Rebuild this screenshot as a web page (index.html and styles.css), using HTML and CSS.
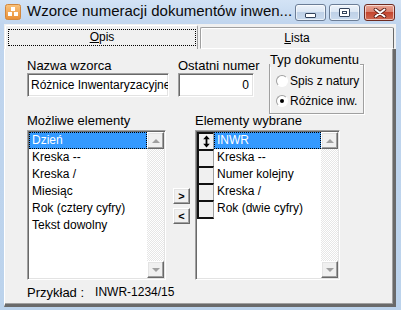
FILE: index.html
```html
<!DOCTYPE html>
<html>
<head>
<meta charset="utf-8">
<link rel="stylesheet" href="styles.css">
</head>
<body>
<div class="window">
  <div class="titlebar">
    <svg class="appicon" viewBox="0 0 16 16" width="16" height="16">
      <defs>
        <linearGradient id="ig" x1="0" y1="0" x2="0" y2="1">
          <stop offset="0" stop-color="#f9c47e"/>
          <stop offset="1" stop-color="#e98f36"/>
        </linearGradient>
      </defs>
      <rect x="0.5" y="0.5" width="15" height="15" rx="2" fill="url(#ig)" stroke="#d2873c"/>
      <rect x="6" y="3" width="4" height="4" fill="#fff"/>
      <rect x="3" y="8" width="4" height="4" fill="#fff"/>
      <rect x="9" y="8" width="4" height="4" fill="#fff"/>
    </svg>
    <span class="title">Wzorce numeracji dokumentów inwen...</span>
    <div class="tbtns">
      <span class="tb"><span class="g-min"></span></span>
      <span class="tb"><span class="g-max"></span></span>
      <span class="tb close">
        <svg viewBox="0 0 14 10" width="14" height="10">
          <path d="M2.5 1.5 L11.5 8.5 M11.5 1.5 L2.5 8.5" stroke="#5a1f17" stroke-width="3.6" stroke-linecap="round"/>
          <path d="M2.5 1.5 L11.5 8.5 M11.5 1.5 L2.5 8.5" stroke="#fff" stroke-width="2" stroke-linecap="round"/>
        </svg>
      </span>
    </div>
  </div>
  <div class="client">
    <div class="tabs">
      <div class="tab active"><span class="focus"><u>O</u>pis</span></div>
      <div class="tab"><span><u>L</u>ista</span></div>
    </div>
    <div class="page">
      <div class="row1">
        <div class="field nazwa">
          <div class="lbl">Nazwa wzorca</div>
          <div class="input sunken">Różnice Inwentaryzacyjne</div>
        </div>
        <div class="field ostatni">
          <div class="lbl">Ostatni numer</div>
          <div class="input sunken num">0</div>
        </div>
        <div class="group">
          <span class="legend">Typ dokumentu</span>
          <div class="radios">
            <div class="radio"><span class="circle"></span><span>Spis z natury</span></div>
            <div class="radio"><span class="circle on"></span><span>Różnice inw.</span></div>
          </div>
        </div>
      </div>
      <div class="row2">
        <div class="col colleft">
          <div class="lbl">Możliwe elementy</div>
          <div class="list sunken">
            <div class="items">
              <div class="item sel">Dzień</div>
              <div class="item">Kreska --</div>
              <div class="item">Kreska /</div>
              <div class="item">Miesiąc</div>
              <div class="item">Rok (cztery cyfry)</div>
              <div class="item">Tekst dowolny</div>
            </div>
            <div class="vscroll">
              <span class="sbtn raised"><span class="arrow up"></span></span>
              <span class="strack"></span>
              <span class="sbtn raised"><span class="arrow down"></span></span>
            </div>
          </div>
        </div>
        <div class="movebtns">
          <span class="mbtn raised">&gt;</span>
          <span class="mbtn raised">&lt;</span>
        </div>
        <div class="col colright">
          <div class="lbl">Elementy wybrane</div>
          <div class="list sunken">
            <div class="items">
              <div class="grow">
                <span class="cell">
                  <svg viewBox="0 0 7 13" width="7" height="13">
                    <path d="M3.5 0.5 L6.8 4.2 L4.4 4.2 L4.4 8.8 L6.8 8.8 L3.5 12.5 L0.2 8.8 L2.6 8.8 L2.6 4.2 L0.2 4.2 Z" fill="#000"/>
                  </svg>
                </span>
                <span class="item sel">INWR</span>
              </div>
              <div class="grow"><span class="cell"></span><span class="item">Kreska --</span></div>
              <div class="grow"><span class="cell"></span><span class="item">Numer kolejny</span></div>
              <div class="grow"><span class="cell"></span><span class="item">Kreska /</span></div>
              <div class="grow last"><span class="cell"></span><span class="item">Rok (dwie cyfry)</span></div>
            </div>
            <div class="vscroll">
              <span class="sbtn raised"><span class="arrow up"></span></span>
              <span class="strack"></span>
              <span class="sbtn raised"><span class="arrow down"></span></span>
            </div>
          </div>
        </div>
      </div>
      <div class="example"><span>Przykład :</span><span class="exval">INWR-1234/15</span></div>
    </div>
  </div>
</div>
</body>
</html>
```

FILE: styles.css
```css
* { box-sizing: border-box; margin: 0; padding: 0; }
html, body { width: 401px; height: 310px; overflow: hidden; }
body {
  font: 13px/15px "Liberation Sans", Arial, sans-serif;
  color: #000;
  background: #bcd3ec;
}
.window {
  width: 401px;
  height: 310px;
  padding: 0 5px 3px 4px;
  display: flex;
  flex-direction: column;
  background: linear-gradient(#d3e3f5, #c0d5ee 24px, #bcd3ec);
}
.titlebar {
  height: 24px;
  flex-shrink: 0;
  display: flex;
  align-items: flex-start;
}
.appicon { margin: 4px 0 0 1px; flex-shrink: 0; }
.title {
  font: 15px/24px "Liberation Sans", Arial, sans-serif;
  margin-left: 6px;
  flex: 1;
  white-space: nowrap;
  margin-top: -1px;
  color: #0a0a0a;
}
.tbtns { display: flex; margin: 4px 2px 0 0; }
.tb {
  width: 31px;
  height: 17px;
  margin-left: 3px;
  border: 1px solid #6b7d96;
  border-radius: 3px;
  background: linear-gradient(#eef3fa 0, #dce7f4 45%, #bfd1e7 50%, #c9daee 100%);
  box-shadow: inset 0 0 0 1px rgba(255,255,255,.6);
  display: flex;
  align-items: center;
  justify-content: center;
}
.tb.close {
  margin-left: 4px;
  border-color: #6d2a20;
  background: linear-gradient(#eaa595 0, #d98270 45%, #c4452e 50%, #d06a53 100%);
}
.g-min {
  width: 11px;
  height: 5px;
  margin-top: 5px;
  border: 1px solid #34445c;
  border-radius: 1px;
  background: #fff;
}
.g-max {
  width: 11px;
  height: 9px;
  border: 1px solid #34445c;
  border-radius: 1px;
  background: #fff;
  box-shadow: inset 0 0 0 2px #fff, inset 0 0 0 3px #34445c;
}
.client {
  flex: 1;
  background: #f0f0f0;
  display: flex;
  flex-direction: column;
}
.tabs {
  height: 25px;
  flex-shrink: 0;
  display: flex;
  align-items: flex-end;
  padding-left: 1px;
  font-size: 12px;
}
.tab {
  height: 22px;
  width: 194px;
  margin-left: 2px;
  border: 1px solid #a0a0a0;
  border-bottom: 1px solid #fff;
  border-right: 1px solid #696969;
  border-radius: 2px 2px 0 0;
  box-shadow: inset 1px 1px #fff;
  display: flex;
  align-items: center;
  justify-content: center;
  padding-top: 1px;
}
.tab.active {
  height: 24px;
  width: 193px;
  margin-left: 0;
  border: 0;
  border-top: 1px solid #fff;
  border-left: 1px solid #fff;
  border-right: 1px solid #a0a0a0;
  box-shadow: none;
  align-items: flex-start;
  padding: 3px 0 0 1px;
}
.focus {
  width: 188px;
  height: 17px;
  border: 1px dotted #000;
  text-align: center;
  line-height: 15px;
}
.page {
  flex: 1;
  border-left: 1px solid #fff;
  border-right: 3px solid #6a6a6a;
  border-bottom: 3px solid #6a6a6a;
  box-shadow: inset -1px -1px #a0a0a0;
  padding-left: 22px;
}
.lbl { white-space: nowrap; }
.row1 { display: flex; align-items: flex-start; height: 65px; }
.field { padding-top: 9px; }
.nazwa { width: 142px; }
.ostatni { width: 76px; margin-left: 9px; }
.sunken {
  border: 1px solid;
  border-color: #a0a0a0 #fff #fff #a0a0a0;
  box-shadow: inset 1px 1px #696969, inset -1px -1px #e3e3e3;
  background: #fff;
}
.raised {
  border: 1px solid;
  border-color: #fff #696969 #696969 #fff;
  box-shadow: inset -1px -1px #a0a0a0, inset 1px 1px #e3e3e3;
  background: #f0f0f0;
}
.input {
  height: 24px;
  padding: 0 4px 0 3px;
  font-size: 12px;
  line-height: 22px;
  white-space: nowrap;
  overflow: hidden;
}
.input.num { text-align: right; }
.group {
  width: 95px;
  height: 50px;
  margin: 15px 0 0 15px;
  border: 1px solid #a0a0a0;
  box-shadow: inset 1px 1px #fff, 1px 1px #fff;
  display: flex;
  flex-direction: column;
  align-items: flex-start;
  font-size: 12px;
}
.legend {
  margin-top: -13px;
  background: #f0f0f0;
  font-size: 13px;
  line-height: 15px;
  padding-right: 1px;
  white-space: nowrap;
}
.radios { padding: 4px 0 0 6px; }
.radio {
  height: 20px;
  display: flex;
  align-items: center;
  white-space: nowrap;
}
.circle {
  width: 12px;
  height: 12px;
  border-radius: 50%;
  border: 1px solid;
  border-color: #a0a0a0 #fff #fff #a0a0a0;
  background: #fff;
  margin-right: 2px;
  display: flex;
  align-items: center;
  justify-content: center;
}
.circle.on::after {
  content: "";
  width: 4px;
  height: 4px;
  border-radius: 50%;
  background: #000;
}
.row2 { display: flex; align-items: flex-start; margin-top: -1px; }
.col .lbl { margin-bottom: 2px; }
.colleft { width: 139px; }
.colright { width: 145px; margin-left: 5px; }
.list {
  height: 150px;
  padding: 1px;
  display: flex;
  font-size: 12px;
}
.items { flex: 1; display: flex; flex-direction: column; min-width: 0; }
.item {
  height: 17px;
  line-height: 17px;
  padding-left: 3px;
  white-space: nowrap;
}
.item.sel {
  background: #3399ff;
  color: #fff;
  outline: 1px dotted #000;
  outline-offset: -1px;
}
.grow { display: flex; height: 17px; }
.grow .item { flex: 1; }
.cell {
  width: 17px;
  height: 17px;
  flex-shrink: 0;
  background: #f0f0f0;
  border-left: 2px solid #111;
  border-top: 2px solid #111;
  border-right: 1px solid #a0a0a0;
  display: flex;
  align-items: center;
  justify-content: center;
}
.grow.last .cell { border-bottom: 2px solid #111; height: 19px; }
.vscroll {
  width: 17px;
  flex-shrink: 0;
  display: flex;
  flex-direction: column;
  background: repeating-conic-gradient(#fff 0 25%, #e6e6e6 0 50%) 0 0 / 2px 2px;
}
.strack { flex: 1; }
.sbtn {
  height: 17px;
  display: flex;
  align-items: center;
  justify-content: center;
}
.arrow { width: 0; height: 0; border-left: 4px solid transparent; border-right: 4px solid transparent; }
.arrow.up { border-bottom: 4px solid #a0a0a0; }
.arrow.down { border-top: 4px solid #a0a0a0; }
.movebtns {
  width: 17px;
  margin-left: 7px;
  padding-top: 75px;
  display: flex;
  flex-direction: column;
  gap: 4px;
}
.mbtn {
  height: 16px;
  font: bold 11px/14px "Liberation Sans", Arial, sans-serif;
  text-align: center;
}
.example { margin-top: 5px; display: flex; }
.exval { margin-left: 11px; font-size: 12px; }
```
